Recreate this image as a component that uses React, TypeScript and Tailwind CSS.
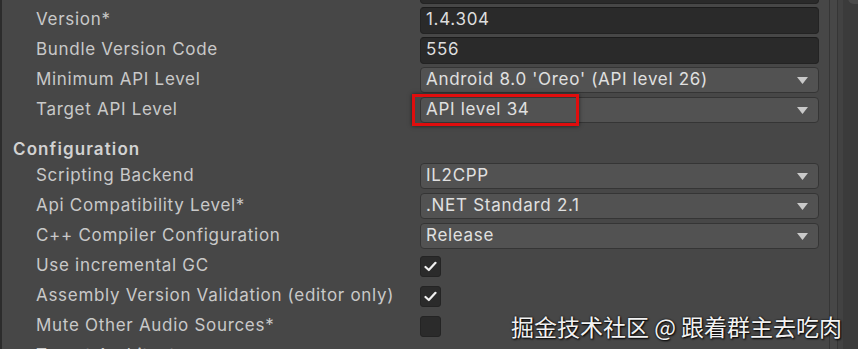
import React from "react";

function Arrow() {
  return (
    <svg width="11" height="7" viewBox="0 0 11 7" className="shrink-0">
      <path d="M0 0 L11 0 L5.5 7 Z" fill="#c9c9c9" />
    </svg>
  );
}

function TextField({ value }: { value: string }) {
  return (
    <div className="h-[27px] w-full rounded-[4px] bg-[#2a2a2a] border border-[#232323] border-t-[#1b1b1b] flex items-center px-[5px] text-[#dedede]">
      {value}
    </div>
  );
}

function Dropdown({ value, highlight }: { value: string; highlight?: boolean }) {
  return (
    <div className="relative h-[26px] w-full rounded-[4px] bg-[#525252] border border-[#353535] flex items-center justify-between pl-[5px] pr-[10px] text-[#e0e0e0]">
      <span>{value}</span>
      <Arrow />
      {highlight && (
        <div className="absolute left-[-9px] top-[-4px] w-[167px] h-[32px] border-[3px] border-[#e00d0d] shadow-[0_0_4px_rgba(0,0,0,0.6)]" />
      )}
    </div>
  );
}

function Check({ checked }: { checked: boolean }) {
  return (
    <div className="w-[21px] h-[21px] rounded-[3px] bg-[#2b2b2b] border border-[#242424] flex items-center justify-center">
      {checked && (
        <svg width="13" height="11" viewBox="0 0 13 11">
          <path d="M1.5 6 L4.8 9 L11.5 1.8" stroke="#f0f0f0" strokeWidth="2.2" fill="none" strokeLinecap="round" strokeLinejoin="round" />
        </svg>
      )}
    </div>
  );
}

function Row({ label, children }: { label: string; children?: React.ReactNode }) {
  return (
    <div className="h-[30px] shrink-0 flex items-center">
      <div className="w-[418px] pl-[34px] text-[#c9c9c9] whitespace-nowrap">{label}</div>
      <div className="flex-1 flex items-center">{children}</div>
    </div>
  );
}

export default function App() {
  return (
    <div
      className="relative w-[858px] h-[349px] overflow-hidden bg-[#474747] flex text-[17px] tracking-[0.7px]"
      style={{ fontFamily: "Inter, 'Noto Sans', sans-serif" }}
    >
      <div className="w-[2px] bg-[#2c2c2c] shrink-0" />
      <div className="w-[817px] shrink-0 flex flex-col mt-[-25px]">
        <Row label="">
          <TextField value="" />
        </Row>
        <Row label="Version*">
          <TextField value="1.4.304" />
        </Row>
        <Row label="Bundle Version Code">
          <TextField value="556" />
        </Row>
        <Row label="Minimum API Level">
          <Dropdown value="Android 8.0 'Oreo' (API level 26)" />
        </Row>
        <Row label="Target API Level">
          <Dropdown value="API level 34" highlight />
        </Row>
        <div className="h-[36px] shrink-0 pt-[12px] pl-[11px] leading-[24px] font-semibold tracking-[1.1px] text-[#d2d2d2]">
          Configuration
        </div>
        <Row label="Scripting Backend">
          <Dropdown value="IL2CPP" />
        </Row>
        <Row label="Api Compatibility Level*">
          <Dropdown value=".NET Standard 2.1" />
        </Row>
        <Row label="C++ Compiler Configuration">
          <Dropdown value="Release" />
        </Row>
        <Row label="Use incremental GC">
          <Check checked />
        </Row>
        <Row label="Assembly Version Validation (editor only)">
          <Check checked />
        </Row>
        <Row label="Mute Other Audio Sources*">
          <Check checked={false} />
        </Row>
        <Row label="Target Architectures" />
      </div>
      <div className="w-[10px] shrink-0" />
      <div className="w-[1px] bg-[#363636] shrink-0" />
      <div className="w-[7px] shrink-0" />
      <div className="w-[1px] bg-[#363636] shrink-0" />
      <div className="w-[5px] bg-[#424242] shrink-0" />
      <div className="flex-1 bg-[#3b3b3b] relative">
        <div className="absolute left-[5px] top-[-4px] w-[12px] h-[8px] rounded-bl-[6px] bg-[#4a4a4a]" />
      </div>
      <div
        className="absolute left-[511px] top-[309px] text-[23px] tracking-normal text-[#f2f2f2] whitespace-nowrap [text-shadow:0_0_2px_#000,1px_1px_2px_#000]"
        style={{ fontFamily: "'Noto Sans CJK SC', 'Noto Sans', sans-serif" }}
      >
        掘金技术社区 @ 跟着群主去吃肉
      </div>
    </div>
  );
}
